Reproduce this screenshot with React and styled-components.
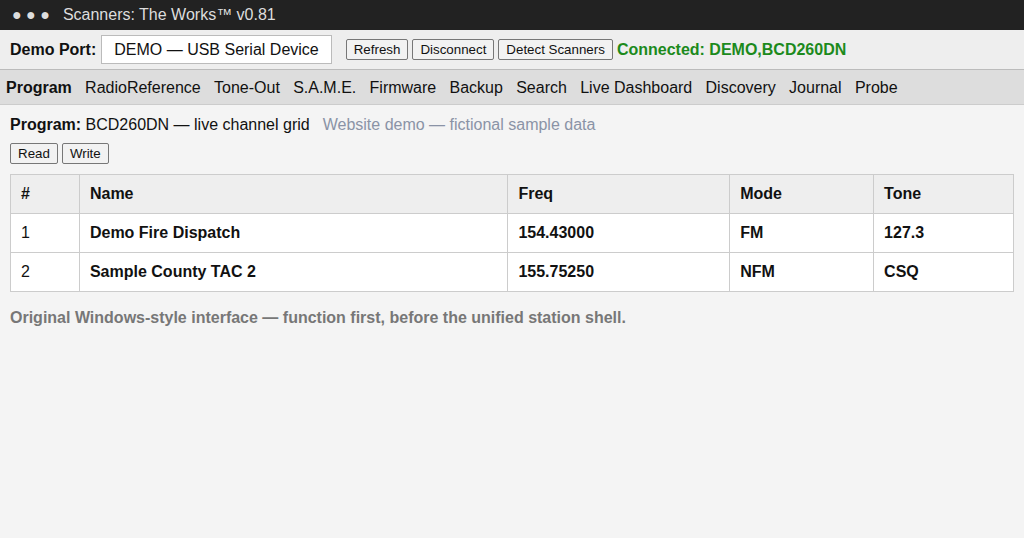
import React from 'react'
import styled, { createGlobalStyle } from 'styled-components'

const GlobalStyle = createGlobalStyle`
  html, body {
    margin: 0;
    padding: 0;
    background: #f4f4f4;
    font-family: 'Liberation Sans', Arial, sans-serif;
    font-size: 16px;
    color: #111;
  }
`

const TitleBar = styled.div`
  height: 30px;
  background: #222;
  color: #ddd;
  display: flex;
  align-items: center;
  padding-left: 12px;
  font-size: 16px;
`

const Dots = styled.span`
  font-size: 16px;
  margin-right: 13px;
  color: #ddd;
`

const PortBar = styled.div`
  background: #eee;
  border-bottom: 1px solid #bbb;
  display: flex;
  align-items: center;
  padding-left: 10px;
  box-sizing: border-box;
  height: 40px;
`

const Label = styled.b`
  margin-right: 5px;
`

const PortBox = styled.div`
  height: 29px;
  box-sizing: border-box;
  background: #fff;
  border: 1px solid #bbb;
  padding: 0 12px;
  display: flex;
  align-items: center;
  margin-right: 14px;
`

const Button = styled.button`
  font-family: 'Liberation Sans', Arial, sans-serif;
  font-size: 13.33px;
  height: 21px;
  padding: 0 7px;
  background: #f2f2f2;
  border: 1px solid #777;
  border-radius: 2px;
  color: #111;
  margin-right: 4px;
  box-sizing: border-box;
`

const Connected = styled.b`
  color: #1c8a1c;
`

const Nav = styled.nav`
  height: 35px;
  box-sizing: border-box;
  background: #ddd;
  border-bottom: 1px solid #ccc;
  display: flex;
  align-items: center;
  padding-left: 6px;
  padding-top: 1px;
  gap: 13.3px;
`

const NavItem = styled.span`
  font-weight: ${p => (p.active ? 'bold' : 'normal')};
  color: #111;
`

const Content = styled.main`
  padding: 10px;
`

const Heading = styled.div`
  line-height: 18px;
  margin: 1px 0 9px;
`

const Muted = styled.span`
  color: #8a93a6;
  margin-left: 13px;
`

const Actions = styled.div`
  display: flex;
  margin-bottom: 10px;
`

const Table = styled.table`
  width: 100%;
  border-collapse: collapse;
  background: #fff;
`

const Th = styled.th`
  background: #eee;
  border: 1px solid #ccc;
  text-align: left;
  height: 39px;
  padding: 0 10px;
  box-sizing: border-box;
`

const Td = styled.td`
  border: 1px solid #ccc;
  height: 39px;
  padding: 0 10px;
  box-sizing: border-box;
  font-weight: ${p => (p.plain ? 'normal' : 'bold')};
`

const Footer = styled.p`
  margin: 17px 0 0;
  color: #777;
  font-weight: bold;
`

const tabs = ['Program', 'RadioReference', 'Tone-Out', 'S.A.M.E.', 'Firmware', 'Backup', 'Search', 'Live Dashboard', 'Discovery', 'Journal', 'Probe']

const channels = [
  { n: 1, name: 'Demo Fire Dispatch', freq: '154.43000', mode: 'FM', tone: '127.3' },
  { n: 2, name: 'Sample County TAC 2', freq: '155.75250', mode: 'NFM', tone: 'CSQ' },
]

export default function App () {
  return (
    <>
      <GlobalStyle />
      <TitleBar>
        <Dots>● ● ●</Dots>
        Scanners: The Works™ v0.81
      </TitleBar>
      <PortBar>
        <Label>Demo Port:</Label>
        <PortBox>DEMO — USB Serial Device</PortBox>
        <Button>Refresh</Button>
        <Button>Disconnect</Button>
        <Button>Detect Scanners</Button>
        <Connected>Connected: DEMO,BCD260DN</Connected>
      </PortBar>
      <Nav>
        {tabs.map((t, i) => (
          <NavItem key={t} active={i === 0}>{t}</NavItem>
        ))}
      </Nav>
      <Content>
        <Heading>
          <b>Program:</b> BCD260DN — live channel grid
          <Muted>Website demo — fictional sample data</Muted>
        </Heading>
        <Actions>
          <Button>Read</Button>
          <Button>Write</Button>
        </Actions>
        <Table>
          <colgroup>
            <col style={{ width: 69 }} />
            <col style={{ width: 429 }} />
            <col style={{ width: 222 }} />
            <col style={{ width: 144 }} />
            <col style={{ width: 140 }} />
          </colgroup>
          <thead>
            <tr>
              <Th>#</Th>
              <Th>Name</Th>
              <Th>Freq</Th>
              <Th>Mode</Th>
              <Th>Tone</Th>
            </tr>
          </thead>
          <tbody>
            {channels.map(c => (
              <tr key={c.n}>
                <Td plain>{c.n}</Td>
                <Td>{c.name}</Td>
                <Td>{c.freq}</Td>
                <Td>{c.mode}</Td>
                <Td>{c.tone}</Td>
              </tr>
            ))}
          </tbody>
        </Table>
        <Footer>Original Windows-style interface — function first, before the unified station shell.</Footer>
      </Content>
    </>
  )
}
